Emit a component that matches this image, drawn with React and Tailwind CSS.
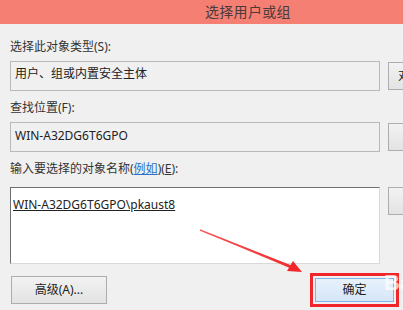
import React from "react";

const cjk = { fontFamily: '"Segoe UI", "Noto Sans", "Noto Sans CJK SC", sans-serif' };

function SideButton({ children, className = "" }) {
  return (
    <div
      className={
        "w-[96px] h-[28px] shrink-0 border border-[#adadad] bg-gradient-to-b from-[#f2f2f2] to-[#e3e3e3] flex items-center text-[12px] text-[#222] " +
        className
      }
    >
      {children}
    </div>
  );
}

export default function App() {
  return (
    <div
      className="relative w-[403px] h-[310px] overflow-hidden bg-[#f0f0f0] text-[#222]"
      style={cjk}
    >
      {/* title bar */}
      <div className="h-[24px] bg-[#f47f72] pl-[205px] flex items-center">
        <span className="text-[14px] leading-[24px] text-[#4a3a3a] tracking-[0.3px]">选择用户或组</span>
      </div>

      <div className="pl-[10px] w-[520px]">
        {/* section 1 */}
        <div className="pt-[14px] text-[12px] leading-[17px] text-[#333]">选择此对象类型(S):</div>
        <div className="mt-[6px] flex gap-[8px] items-start">
          <div className="w-[370px] h-[30px] shrink-0 border border-[#b9b9b9] bg-[#f0f0f0] pl-[4px] pt-[3px] text-[12px] leading-[17px]">
            用户、组或内置安全主体
          </div>
          <SideButton className="mt-[1px] pl-[9px]">对象类型(T)...</SideButton>
        </div>

        {/* section 2 */}
        <div className="pt-[8px] text-[12px] leading-[17px] text-[#333]">查找位置(F):</div>
        <div className="mt-[6px] flex gap-[8px] items-start">
          <div className="w-[370px] h-[30px] shrink-0 border border-[#b9b9b9] bg-[#f0f0f0] pl-[4px] pt-[4px] text-[12px] leading-[17px]">
            WIN-A32DG6T6GPO
          </div>
          <SideButton className="mt-[1px] justify-center" />
        </div>

        {/* section 3 */}
        <div className="pt-[8px] text-[12px] leading-[17px] text-[#333]">
          输入要选择的对象名称(<span className="text-[#2a6fc9] underline">例如</span>)(<span className="underline">E</span>):
        </div>
        <div className="mt-[10px] flex gap-[8px] items-start">
          <div className="w-[370px] h-[77px] shrink-0 border border-[#6e6e6e] border-r-[#d9d9d9] border-b-[#d9d9d9] bg-white pl-[2px] pt-[8px] text-[12px] leading-[17px]">
            <span className="underline">WIN-A32DG6T6GPO\pkaust8</span>
          </div>
          <SideButton className="justify-center" />
        </div>

        {/* bottom buttons */}
        <div className="mt-[9px] flex items-start w-[389px]">
          <div className="mt-[3px] ml-[1px] w-[96px] h-[28px] border border-[#adadad] bg-gradient-to-b from-[#f2f2f2] to-[#e3e3e3] flex items-center justify-center text-[12px] text-[#222]">
            高级(A)...
          </div>
          <div className="ml-auto border-[3px] border-[#f0262a] p-[2px] w-[89px] h-[34px]">
            <div className="w-full h-full border border-[#7eb4ea] bg-gradient-to-b from-[#e7f1fb] to-[#d6e7f8] flex items-center justify-center text-[12px] text-[#222]">
              确定
            </div>
          </div>
        </div>
      </div>

      {/* watermark */}
      <div className="absolute left-[384px] top-[272px] text-[22px] font-bold text-white/70 leading-none" style={{ fontFamily: '"Liberation Sans", sans-serif' }}>
        Ba
      </div>

      {/* red arrow */}
      <svg className="absolute left-0 top-0" width="403" height="310" viewBox="0 0 403 310">
        <defs>
          <linearGradient id="g" x1="200" y1="230" x2="300" y2="272" gradientUnits="userSpaceOnUse">
            <stop offset="0" stopColor="#f24a4a" stopOpacity="0.7" />
            <stop offset="1" stopColor="#f2262a" />
          </linearGradient>
        </defs>
        <polygon points="200,229.5 292,266 291,268.5 200,230.5" fill="url(#g)" />
        <line x1="200" y1="230" x2="293" y2="267" stroke="url(#g)" strokeWidth="1.6" />
        <polygon points="302,272 287,271 293,261" fill="#f2262a" />
      </svg>
    </div>
  );
}
